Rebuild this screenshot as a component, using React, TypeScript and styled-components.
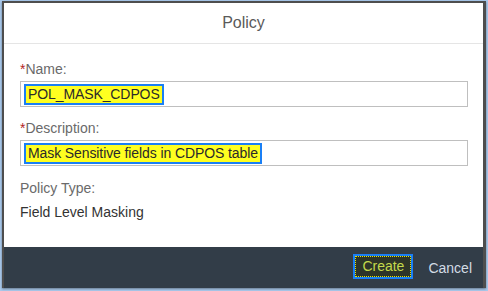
import styled, { createGlobalStyle } from 'styled-components';

const GlobalStyle = createGlobalStyle`
  html, body {
    margin: 0;
    padding: 0;
    background: #a9c9ec;
  }
  body {
    font-family: 'Liberation Sans', Arial, sans-serif;
  }
`;

const Page = styled.div`
  display: flex;
  flex-direction: column;
  width: 488px;
  height: 291px;
  box-sizing: border-box;
  padding: 1px 2px 3px 2px;
`;

const Dialog = styled.div`
  flex: 1;
  display: flex;
  flex-direction: column;
  background: #ffffff;
  border: 2px solid #4e4e4e;
  border-bottom: none;
  border-right-width: 3px;
  box-shadow: 0 1px 2px rgba(0, 0, 0, 0.4);
`;

const Header = styled.div`
  height: 40px;
  display: flex;
  align-items: center;
  justify-content: center;
  border-bottom: 1px solid #e5e5e5;
  font-size: 16px;
  color: #5a5a5a;
`;

const Content = styled.div`
  flex: 1;
  display: flex;
  flex-direction: column;
  padding: 16px 15px 0 16px;
`;

const Label = styled.div<{ $gap?: number }>`
  font-size: 14px;
  line-height: 18px;
  color: #6a6a6a;
  margin-top: ${(p) => p.$gap ?? 0}px;
`;

const Required = styled.span`
  color: #b21f1f;
`;

const InputBox = styled.div`
  margin-top: 3px;
  height: 26px;
  box-sizing: border-box;
  border: 1px solid #bfbfbf;
  padding: 1px 3px;
  display: flex;
  align-items: center;
`;

const Highlight = styled.span`
  display: inline-block;
  height: 21px;
  box-sizing: border-box;
  border: 2px solid #1a7ff5;
  background: #ffff20;
  padding: 0 2px;
  font-size: 14px;
  letter-spacing: -0.1px;
  line-height: 17px;
  color: #2a2a2a;
`;

const Value = styled.div`
  margin-top: 6px;
  font-size: 14px;
  line-height: 18px;
  color: #333333;
`;

const Footer = styled.div`
  height: 41px;
  display: flex;
  align-items: center;
  justify-content: flex-end;
  gap: 15px;
  padding-right: 11px;
  background: #323d48;
`;

const PrimaryButton = styled.button`
  height: 25px;
  box-sizing: border-box;
  border: 2px solid #1a7ff5;
  outline: 1px dotted #e6e600;
  outline-offset: -3px;
  background: #2d3428;
  color: #c4d94c;
  font-family: inherit;
  font-size: 14px;
  padding: 0 7px;
  margin-bottom: 3px;
`;

const TextButton = styled.button`
  border: none;
  background: transparent;
  color: #d3dce5;
  font-family: inherit;
  font-size: 14px;
  padding: 0;
`;

export default function App() {
  return (
    <>
      <GlobalStyle />
      <Page>
        <Dialog>
          <Header>Policy</Header>
          <Content>
            <Label>
              <Required>*</Required>Name:
            </Label>
            <InputBox>
              <Highlight>POL_MASK_CDPOS</Highlight>
            </InputBox>
            <Label $gap={12}>
              <Required>*</Required>Description:
            </Label>
            <InputBox>
              <Highlight>Mask Sensitive fields in CDPOS table</Highlight>
            </InputBox>
            <Label $gap={13}>Policy Type:</Label>
            <Value>Field Level Masking</Value>
          </Content>
          <Footer>
            <PrimaryButton>Create</PrimaryButton>
            <TextButton>Cancel</TextButton>
          </Footer>
        </Dialog>
      </Page>
    </>
  );
}
